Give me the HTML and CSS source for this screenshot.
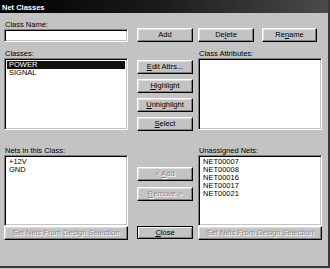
FILE: index.html
```html
<!DOCTYPE html>
<html lang="en">
<head>
  <meta charset="utf-8">
  <title>Net Classes</title>
  <link rel="stylesheet" href="styles.css">
</head>
<body>
  <div class="dialog">
    <div class="title">Net Classes</div>

    <div class="content">
      <label class="label name-label" for="className">Class Name:</label>
      <input type="text" id="className" class="field name-field">
      <button class="btn add-btn">Add</button>
      <div class="top-right">
        <button class="btn">De<u>l</u>ete</button>
        <button class="btn rename-btn">Re<u>n</u>ame</button>
      </div>

      <div class="label classes-label">Classes:</div>
      <div class="label attrs-label">Class Attributes:</div>
      <div class="field list classes-list">
        <div class="item selected">POWER</div>
        <div class="item">SIGNAL</div>
      </div>
      <div class="mid-buttons class-buttons">
        <button class="btn"><u>E</u>dit Attrs...</button>
        <button class="btn"><u>H</u>ighlight</button>
        <button class="btn"><u>U</u>nhighlight</button>
        <button class="btn"><u>S</u>elect</button>
      </div>
      <div class="field list attrs-list"></div>

      <div class="label nets-label">Nets in this Class:</div>
      <div class="label unassigned-label">Unassigned Nets:</div>
      <div class="field list nets-list">
        <div class="item">+12V</div>
        <div class="item">GND</div>
      </div>
      <div class="mid-buttons net-buttons">
        <button class="btn" disabled>&lt; <u>A</u>dd</button>
        <button class="btn" disabled><u>R</u>emove &gt;</button>
      </div>
      <div class="field list unassigned-list">
        <div class="item">NET00007</div>
        <div class="item">NET00008</div>
        <div class="item">NET00016</div>
        <div class="item">NET00017</div>
        <div class="item">NET00021</div>
      </div>

      <button class="btn wide-btn left-set" disabled>Set Nets From Design Selection</button>
      <button class="btn close-btn"><u>C</u>lose</button>
      <button class="btn wide-btn right-set" disabled>Set Nets From Design Selection</button>
    </div>
  </div>
</body>
</html>
```

FILE: styles.css
```css
body {
  margin: 0;
  background: #c3c3c3;
  font-family: 'Liberation Sans', Arial, sans-serif;
  font-size: 7.5px;
  color: #000;
}

.dialog {
  width: 328px;
  height: 266px;
  background: #c3c3c3;
  border-right: 2px solid #3a3a3a;
  border-bottom: 2px solid #3a3a3a;
}

.title {
  box-sizing: border-box;
  height: 13px;
  padding: 2px 0 0 2px;
  line-height: 12px;
  font-weight: bold;
  color: #fff;
  background: linear-gradient(to right, #000 0%, #1c1c1c 50%, #4a4a4a 100%);
}

.content {
  display: grid;
  padding-left: 4px;
  grid-template-columns: 124px 9px 56px 5px 124px;
  grid-template-rows: 15px 14px 16px 72px 25px 71px 40px;
}

.label {
  align-self: end;
  line-height: 9px;
  padding-left: 1px;
}

.name-label { grid-area: 1 / 1; margin-bottom: -1px; }
.name-field { grid-area: 2 / 1; }
.add-btn { grid-area: 2 / 3; }
.top-right { grid-area: 2 / 5; display: flex; gap: 8px; }
.top-right .btn { width: 56px; }
.top-right .rename-btn { width: 55px; }

.classes-label { grid-area: 3 / 1; }
.attrs-label { grid-area: 3 / 5; }
.classes-list { grid-area: 4 / 1; }
.class-buttons { grid-area: 4 / 3; padding-top: 2px; gap: 5px; }
.attrs-list { grid-area: 4 / 5; }

.nets-label { grid-area: 5 / 1; }
.unassigned-label { grid-area: 5 / 5; }
.nets-list { grid-area: 6 / 1; }
.net-buttons { grid-area: 6 / 3; padding-top: 12px; gap: 6px; }
.unassigned-list { grid-area: 6 / 5; }

.left-set { grid-area: 7 / 1; margin-top: 9px; align-self: start; }
.right-set { grid-area: 7 / 5; margin-top: 9px; align-self: start; }
.close-btn { grid-area: 7 / 3; margin-top: 21px; align-self: start; }

.field {
  box-sizing: border-box;
  background: #fff;
  border: 1px solid;
  border-color: #808080 #fff #fff #808080;
  box-shadow: inset 1px 1px #000, inset -1px -1px #c3c3c3;
  margin: 0;
  padding: 0;
  font: inherit;
}

.name-field {
  height: 13px;
  margin-top: 1px;
  width: 124px;
  outline: none;
}

.list {
  padding: 2px 2px;
  overflow: hidden;
}

.item {
  height: 8px;
  line-height: 8px;
  padding-left: 2px;
  white-space: nowrap;
}

.item.selected {
  background: #111;
  color: #fff;
}

.mid-buttons {
  display: flex;
  flex-direction: column;
}

.btn {
  box-sizing: border-box;
  height: 14px;
  width: 56px;
  margin: 0;
  padding: 0;
  background: #c3c3c3;
  border: 1px solid;
  border-color: #fff #000 #000 #fff;
  box-shadow: inset -1px -1px #808080, inset 1px 1px #dfdfdf;
  font-family: inherit;
  font-size: 7.5px;
  line-height: 12px;
  color: #000;
  text-align: center;
  white-space: nowrap;
}

.btn:disabled {
  color: #8a8a8a;
  text-shadow: 1px 1px #fff;
}

.wide-btn {
  width: 124px;
}

.close-btn {
  height: 13px;
  border-color: #000;
  box-shadow: inset 1px 1px #fff, inset -1px -1px #808080;
  line-height: 11px;
}
```
